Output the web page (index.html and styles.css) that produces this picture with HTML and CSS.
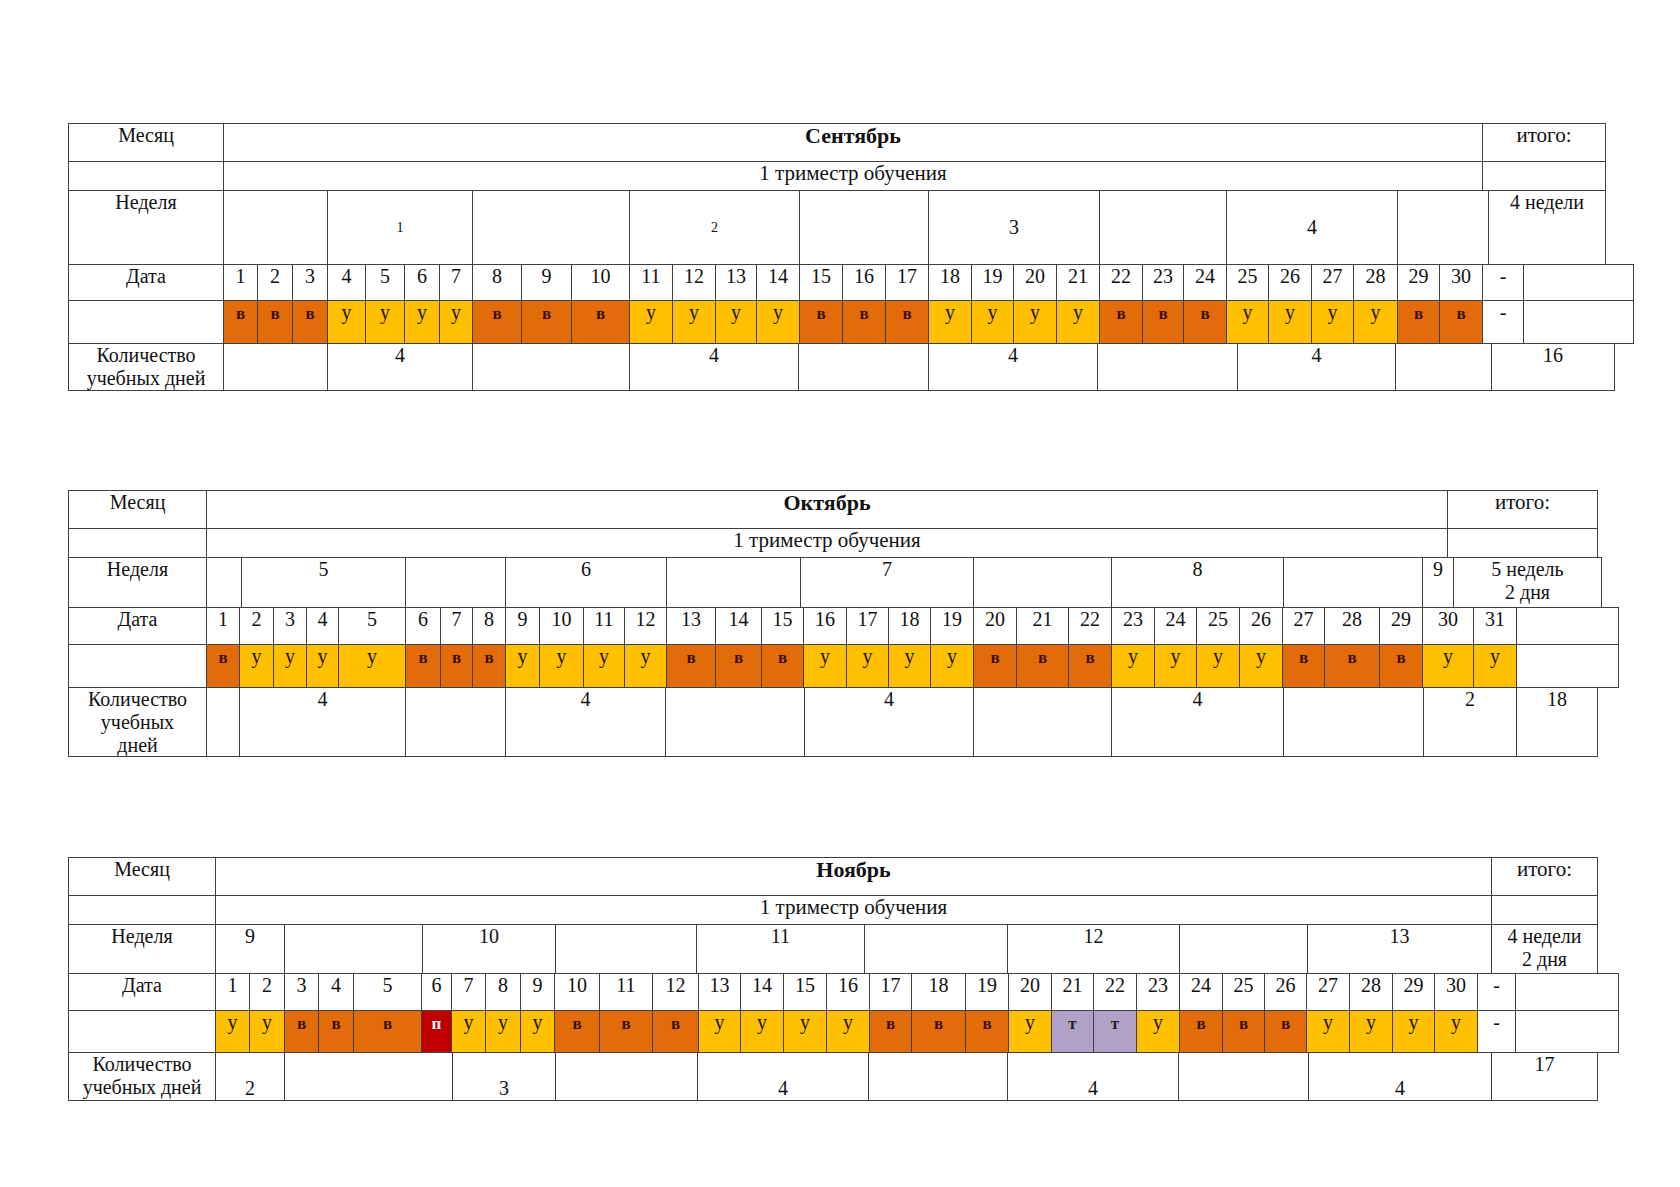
FILE: index.html
```html
<!DOCTYPE html>
<html lang="ru">
<head>
<meta charset="utf-8">
<title>Календарный график</title>
<link rel="stylesheet" href="styles.css">
</head>
<body>
<div class="page">

<div class="tbl t1">
  <div class="row r1">
    <div class="c" style="width:156px">Месяц</div>
    <div class="c b" style="width:1260px">Сентябрь</div>
    <div class="c tot" style="width:124px">итого:</div>
  </div>
  <div class="row r2">
    <div class="c" style="width:156px"></div>
    <div class="c tri" style="width:1260px">1 триместр обучения</div>
    <div class="c" style="width:124px"></div>
  </div>
  <div class="row r3">
    <div class="c" style="width:156px">Неделя</div>
    <div class="c" style="width:105px"></div>
    <div class="c mid wk" style="width:146px">1</div>
    <div class="c" style="width:158px"></div>
    <div class="c mid wk" style="width:171px">2</div>
    <div class="c" style="width:130px"></div>
    <div class="c mid" style="width:172px">3</div>
    <div class="c" style="width:128px"></div>
    <div class="c mid" style="width:172px">4</div>
    <div class="c" style="width:92px"></div>
    <div class="c" style="width:118px">4 недели</div>
  </div>
  <div class="row r4">
    <div class="c" style="width:156px">Дата</div>
    <div class="c" style="width:35px">1</div>
    <div class="c" style="width:36px">2</div>
    <div class="c" style="width:36px">3</div>
    <div class="c" style="width:39px">4</div>
    <div class="c" style="width:40px">5</div>
    <div class="c" style="width:36px">6</div>
    <div class="c" style="width:34px">7</div>
    <div class="c" style="width:50px">8</div>
    <div class="c" style="width:51px">9</div>
    <div class="c" style="width:59px">10</div>
    <div class="c" style="width:44px">11</div>
    <div class="c" style="width:44px">12</div>
    <div class="c" style="width:42px">13</div>
    <div class="c" style="width:44px">14</div>
    <div class="c" style="width:44px">15</div>
    <div class="c" style="width:44px">16</div>
    <div class="c" style="width:44px">17</div>
    <div class="c" style="width:44px">18</div>
    <div class="c" style="width:43px">19</div>
    <div class="c" style="width:44px">20</div>
    <div class="c" style="width:44px">21</div>
    <div class="c" style="width:44px">22</div>
    <div class="c" style="width:42px">23</div>
    <div class="c" style="width:44px">24</div>
    <div class="c" style="width:43px">25</div>
    <div class="c" style="width:44px">26</div>
    <div class="c" style="width:43px">27</div>
    <div class="c" style="width:45px">28</div>
    <div class="c" style="width:43px">29</div>
    <div class="c" style="width:44px">30</div>
    <div class="c" style="width:42px">-</div>
    <div class="c" style="width:111px"></div>
  </div>
  <div class="row r5">
    <div class="c" style="width:156px"></div>
    <div class="c v" style="width:35px"><span class="sm">в</span></div>
    <div class="c v" style="width:36px"><span class="sm">в</span></div>
    <div class="c v" style="width:36px"><span class="sm">в</span></div>
    <div class="c u" style="width:39px">у</div>
    <div class="c u" style="width:40px">у</div>
    <div class="c u" style="width:36px">у</div>
    <div class="c u" style="width:34px">у</div>
    <div class="c v" style="width:50px"><span class="sm">в</span></div>
    <div class="c v" style="width:51px"><span class="sm">в</span></div>
    <div class="c v" style="width:59px"><span class="sm">в</span></div>
    <div class="c u" style="width:44px">у</div>
    <div class="c u" style="width:44px">у</div>
    <div class="c u" style="width:42px">у</div>
    <div class="c u" style="width:44px">у</div>
    <div class="c v" style="width:44px"><span class="sm">в</span></div>
    <div class="c v" style="width:44px"><span class="sm">в</span></div>
    <div class="c v" style="width:44px"><span class="sm">в</span></div>
    <div class="c u" style="width:44px">у</div>
    <div class="c u" style="width:43px">у</div>
    <div class="c u" style="width:44px">у</div>
    <div class="c u" style="width:44px">у</div>
    <div class="c v" style="width:44px"><span class="sm">в</span></div>
    <div class="c v" style="width:42px"><span class="sm">в</span></div>
    <div class="c v" style="width:44px"><span class="sm">в</span></div>
    <div class="c u" style="width:43px">у</div>
    <div class="c u" style="width:44px">у</div>
    <div class="c u" style="width:43px">у</div>
    <div class="c u" style="width:45px">у</div>
    <div class="c v" style="width:43px"><span class="sm">в</span></div>
    <div class="c v" style="width:44px"><span class="sm">в</span></div>
    <div class="c" style="width:42px">-</div>
    <div class="c" style="width:111px"></div>
  </div>
  <div class="row r6">
    <div class="c" style="width:156px">Количество<br>учебных дней</div>
    <div class="c" style="width:105px"></div>
    <div class="c" style="width:146px">4</div>
    <div class="c" style="width:158px"></div>
    <div class="c" style="width:170px">4</div>
    <div class="c" style="width:131px"></div>
    <div class="c" style="width:170px">4</div>
    <div class="c" style="width:141px"></div>
    <div class="c" style="width:159px">4</div>
    <div class="c" style="width:97px"></div>
    <div class="c" style="width:124px">16</div>
  </div>
</div>

<div class="tbl t2">
  <div class="row r1">
    <div class="c" style="width:139px">Месяц</div>
    <div class="c b" style="width:1242px">Октябрь</div>
    <div class="c tot" style="width:151px">итого:</div>
  </div>
  <div class="row r2">
    <div class="c" style="width:139px"></div>
    <div class="c tri" style="width:1242px">1 триместр обучения</div>
    <div class="c" style="width:151px"></div>
  </div>
  <div class="row r3">
    <div class="c" style="width:139px">Неделя</div>
    <div class="c" style="width:36px"></div>
    <div class="c" style="width:165px">5</div>
    <div class="c" style="width:101px"></div>
    <div class="c" style="width:162px">6</div>
    <div class="c" style="width:135px"></div>
    <div class="c" style="width:174px">7</div>
    <div class="c" style="width:139px"></div>
    <div class="c" style="width:173px">8</div>
    <div class="c" style="width:140px"></div>
    <div class="c" style="width:32px">9</div>
    <div class="c" style="width:149px">5 недель<br>2 дня</div>
  </div>
  <div class="row r4">
    <div class="c" style="width:139px">Дата</div>
    <div class="c" style="width:34px">1</div>
    <div class="c" style="width:35px">2</div>
    <div class="c" style="width:34px">3</div>
    <div class="c" style="width:33px">4</div>
    <div class="c" style="width:68px">5</div>
    <div class="c" style="width:36px">6</div>
    <div class="c" style="width:33px">7</div>
    <div class="c" style="width:34px">8</div>
    <div class="c" style="width:35px">9</div>
    <div class="c" style="width:45px">10</div>
    <div class="c" style="width:42px">11</div>
    <div class="c" style="width:43px">12</div>
    <div class="c" style="width:50px">13</div>
    <div class="c" style="width:47px">14</div>
    <div class="c" style="width:43px">15</div>
    <div class="c" style="width:44px">16</div>
    <div class="c" style="width:43px">17</div>
    <div class="c" style="width:43px">18</div>
    <div class="c" style="width:44px">19</div>
    <div class="c" style="width:44px">20</div>
    <div class="c" style="width:53px">21</div>
    <div class="c" style="width:44px">22</div>
    <div class="c" style="width:44px">23</div>
    <div class="c" style="width:43px">24</div>
    <div class="c" style="width:44px">25</div>
    <div class="c" style="width:44px">26</div>
    <div class="c" style="width:43px">27</div>
    <div class="c" style="width:56px">28</div>
    <div class="c" style="width:44px">29</div>
    <div class="c" style="width:52px">30</div>
    <div class="c" style="width:44px">31</div>
    <div class="c" style="width:103px"></div>
  </div>
  <div class="row r5">
    <div class="c" style="width:139px"></div>
    <div class="c v" style="width:34px"><span class="sm">в</span></div>
    <div class="c u" style="width:35px">у</div>
    <div class="c u" style="width:34px">у</div>
    <div class="c u" style="width:33px">у</div>
    <div class="c u" style="width:68px">у</div>
    <div class="c v" style="width:36px"><span class="sm">в</span></div>
    <div class="c v" style="width:33px"><span class="sm">в</span></div>
    <div class="c v" style="width:34px"><span class="sm">в</span></div>
    <div class="c u" style="width:35px">у</div>
    <div class="c u" style="width:45px">у</div>
    <div class="c u" style="width:42px">у</div>
    <div class="c u" style="width:43px">у</div>
    <div class="c v" style="width:50px"><span class="sm">в</span></div>
    <div class="c v" style="width:47px"><span class="sm">в</span></div>
    <div class="c v" style="width:43px"><span class="sm">в</span></div>
    <div class="c u" style="width:44px">у</div>
    <div class="c u" style="width:43px">у</div>
    <div class="c u" style="width:43px">у</div>
    <div class="c u" style="width:44px">у</div>
    <div class="c v" style="width:44px"><span class="sm">в</span></div>
    <div class="c v" style="width:53px"><span class="sm">в</span></div>
    <div class="c v" style="width:44px"><span class="sm">в</span></div>
    <div class="c u" style="width:44px">у</div>
    <div class="c u" style="width:43px">у</div>
    <div class="c u" style="width:44px">у</div>
    <div class="c u" style="width:44px">у</div>
    <div class="c v" style="width:43px"><span class="sm">в</span></div>
    <div class="c v" style="width:56px"><span class="sm">в</span></div>
    <div class="c v" style="width:44px"><span class="sm">в</span></div>
    <div class="c u" style="width:52px">у</div>
    <div class="c u" style="width:44px">у</div>
    <div class="c" style="width:103px"></div>
  </div>
  <div class="row r6">
    <div class="c" style="width:139px">Количество<br>учебных<br>дней</div>
    <div class="c" style="width:34px"></div>
    <div class="c" style="width:167px">4</div>
    <div class="c" style="width:101px"></div>
    <div class="c" style="width:161px">4</div>
    <div class="c" style="width:140px"></div>
    <div class="c" style="width:170px">4</div>
    <div class="c" style="width:139px"></div>
    <div class="c" style="width:173px">4</div>
    <div class="c" style="width:141px"></div>
    <div class="c" style="width:94px">2</div>
    <div class="c" style="width:82px">18</div>
  </div>
</div>

<div class="tbl t3">
  <div class="row r1">
    <div class="c" style="width:148px">Месяц</div>
    <div class="c b" style="width:1277px">Ноябрь</div>
    <div class="c tot" style="width:107px">итого:</div>
  </div>
  <div class="row r2">
    <div class="c" style="width:148px"></div>
    <div class="c tri" style="width:1277px">1 триместр обучения</div>
    <div class="c" style="width:107px"></div>
  </div>
  <div class="row r3">
    <div class="c" style="width:148px">Неделя</div>
    <div class="c" style="width:70px">9</div>
    <div class="c" style="width:139px"></div>
    <div class="c" style="width:134px">10</div>
    <div class="c" style="width:142px"></div>
    <div class="c" style="width:169px">11</div>
    <div class="c" style="width:144px"></div>
    <div class="c" style="width:173px">12</div>
    <div class="c" style="width:129px"></div>
    <div class="c" style="width:185px">13</div>
    <div class="c" style="width:107px">4 недели<br>2 дня</div>
  </div>
  <div class="row r4">
    <div class="c" style="width:148px">Дата</div>
    <div class="c" style="width:35px">1</div>
    <div class="c" style="width:36px">2</div>
    <div class="c" style="width:35px">3</div>
    <div class="c" style="width:36px">4</div>
    <div class="c" style="width:69px">5</div>
    <div class="c" style="width:31px">6</div>
    <div class="c" style="width:35px">7</div>
    <div class="c" style="width:36px">8</div>
    <div class="c" style="width:35px">9</div>
    <div class="c" style="width:46px">10</div>
    <div class="c" style="width:54px">11</div>
    <div class="c" style="width:47px">12</div>
    <div class="c" style="width:43px">13</div>
    <div class="c" style="width:44px">14</div>
    <div class="c" style="width:44px">15</div>
    <div class="c" style="width:44px">16</div>
    <div class="c" style="width:43px">17</div>
    <div class="c" style="width:55px">18</div>
    <div class="c" style="width:44px">19</div>
    <div class="c" style="width:44px">20</div>
    <div class="c" style="width:43px">21</div>
    <div class="c" style="width:44px">22</div>
    <div class="c" style="width:44px">23</div>
    <div class="c" style="width:44px">24</div>
    <div class="c" style="width:43px">25</div>
    <div class="c" style="width:43px">26</div>
    <div class="c" style="width:44px">27</div>
    <div class="c" style="width:44px">28</div>
    <div class="c" style="width:43px">29</div>
    <div class="c" style="width:44px">30</div>
    <div class="c" style="width:39px">-</div>
    <div class="c" style="width:104px"></div>
  </div>
  <div class="row r5">
    <div class="c" style="width:148px"></div>
    <div class="c u" style="width:35px">у</div>
    <div class="c u" style="width:36px">у</div>
    <div class="c v" style="width:35px"><span class="sm">в</span></div>
    <div class="c v" style="width:36px"><span class="sm">в</span></div>
    <div class="c v" style="width:69px"><span class="sm">в</span></div>
    <div class="c p" style="width:31px"><span class="sm">п</span></div>
    <div class="c u" style="width:35px">у</div>
    <div class="c u" style="width:36px">у</div>
    <div class="c u" style="width:35px">у</div>
    <div class="c v" style="width:46px"><span class="sm">в</span></div>
    <div class="c v" style="width:54px"><span class="sm">в</span></div>
    <div class="c v" style="width:47px"><span class="sm">в</span></div>
    <div class="c u" style="width:43px">у</div>
    <div class="c u" style="width:44px">у</div>
    <div class="c u" style="width:44px">у</div>
    <div class="c u" style="width:44px">у</div>
    <div class="c v" style="width:43px"><span class="sm">в</span></div>
    <div class="c v" style="width:55px"><span class="sm">в</span></div>
    <div class="c v" style="width:44px"><span class="sm">в</span></div>
    <div class="c u" style="width:44px">у</div>
    <div class="c t" style="width:43px"><span class="sm">т</span></div>
    <div class="c t" style="width:44px"><span class="sm">т</span></div>
    <div class="c u" style="width:44px">у</div>
    <div class="c v" style="width:44px"><span class="sm">в</span></div>
    <div class="c v" style="width:43px"><span class="sm">в</span></div>
    <div class="c v" style="width:43px"><span class="sm">в</span></div>
    <div class="c u" style="width:44px">у</div>
    <div class="c u" style="width:44px">у</div>
    <div class="c u" style="width:43px">у</div>
    <div class="c u" style="width:44px">у</div>
    <div class="c" style="width:39px">-</div>
    <div class="c" style="width:104px"></div>
  </div>
  <div class="row r6">
    <div class="c" style="width:148px">Количество<br>учебных дней</div>
    <div class="c bot" style="width:70px">2</div>
    <div class="c" style="width:169px"></div>
    <div class="c bot" style="width:104px">3</div>
    <div class="c" style="width:143px"></div>
    <div class="c bot" style="width:172px">4</div>
    <div class="c" style="width:140px"></div>
    <div class="c bot" style="width:172px">4</div>
    <div class="c" style="width:131px"></div>
    <div class="c bot" style="width:184px">4</div>
    <div class="c" style="width:107px">17</div>
  </div>
</div>

</div>
</body>
</html>
```

FILE: styles.css
```css
* { box-sizing: border-box; }

html, body {
  margin: 0;
  background: #fff;
}

body {
  font-family: "Liberation Serif", "Times New Roman", serif;
  font-size: 20px;
  line-height: 23px;
  color: #111;
}

.page {
  padding: 123px 0 0 68px;
}

.t2 { margin-top: 99px; }
.t3 { margin-top: 100px; }

.row {
  display: flex;
  margin-top: -1px;
}
.row:first-child { margin-top: 0; }

.c {
  flex: none;
  border: 1px solid #3f3f3f;
  margin-left: -1px;
  text-align: center;
  white-space: nowrap;
  overflow: hidden;
}
.c:first-child { margin-left: 0; }

.mid {
  display: flex;
  align-items: center;
  justify-content: center;
}
.bot {
  display: flex;
  align-items: flex-end;
  justify-content: center;
}

.b {
  font-weight: bold;
  font-size: 22px;
}
.tri { font-size: 21px; }
.tot { font-size: 21px; }
.wk { font-size: 14px; }

.v { background: #e36c0a; color: #3a1000; }
.u { background: #ffc000; color: #1a1200; }
.p { background: #c00000; color: #fff; }
.t { background: #b2a1c7; color: #222; }

.sm {
  font-size: 17px;
  font-weight: bold;
}

.r1 { height: 39px; }
.r2 { height: 30px; }

.t1 .r3 { height: 75px; }
.t1 .r4 { height: 37px; }
.t1 .r5 { height: 44px; }
.t1 .r6 { height: 48px; }

.t2 .r3 { height: 51px; }
.t2 .r4 { height: 38px; }
.t2 .r5 { height: 44px; }
.t2 .r6 { height: 70px; }

.t3 .r3 { height: 50px; }
.t3 .r4 { height: 38px; }
.t3 .r5 { height: 43px; }
.t3 .r6 { height: 49px; }
```
